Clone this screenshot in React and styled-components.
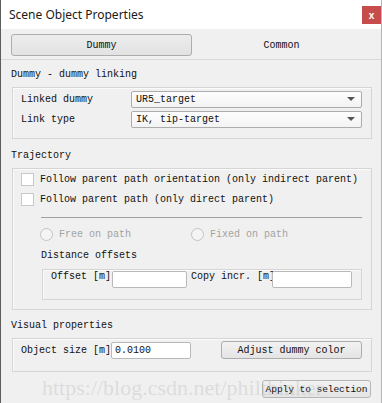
import React from 'react';
import styled, { createGlobalStyle } from 'styled-components';

const GlobalStyle = createGlobalStyle`
  html, body {
    margin: 0;
    padding: 0;
    background: #ffffff;
  }
`;

const Window = styled.div`
  position: relative;
  width: 382px;
  height: 403px;
  box-sizing: border-box;
  background: #f0f0f0;
  border-left: 1px solid #5e5e5e;
  border-right: 1px solid #b4b4b4;
  overflow: hidden;
  font-family: "Liberation Mono", "DejaVu Sans Mono", monospace;
  font-size: 10px;
  color: #111;
`;

const TitleBar = styled.div`
  height: 29px;
  background: #ffffff;
  display: flex;
  justify-content: space-between;
  align-items: flex-start;
`;

const Title = styled.div`
  font-family: "Noto Sans", "Liberation Sans", sans-serif;
  font-size: 12px;
  line-height: 29px;
  padding-left: 8px;
  color: #1a1a1a;
`;

const CloseButton = styled.div`
  margin-top: 6px;
  width: 19px;
  height: 18px;
  background: #c74d4d;
  color: #fff;
  font-family: "Liberation Sans", sans-serif;
  font-weight: bold;
  font-size: 10px;
  display: flex;
  align-items: center;
  justify-content: center;
`;

const TabBar = styled.div`
  display: grid;
  grid-template-columns: 181px 1fr;
  padding: 5px 10px 0 10px;
  height: 22px;
  margin-bottom: 3px;
`;

const Tab = styled.div`
  display: flex;
  align-items: center;
  justify-content: center;
  border-radius: 3px;
  border: 1px solid ${(p) => (p.active ? '#adadad' : 'transparent')};
  background: ${(p) => (p.active ? 'linear-gradient(#ececec, #e2e2e2)' : 'transparent')};
  font-family: "Liberation Mono", monospace;
  font-size: 10px;
`;

const Rule = styled.div`
  height: 1px;
  background: #d9d9d9;
`;

const Body = styled.div`
  padding: 0 9px 0 10px;
`;

const SectionLabel = styled.div`
  height: 14px;
  line-height: 14px;
  margin-top: ${(p) => p.top}px;
  margin-bottom: 5px;
  white-space: pre;
`;

const GroupBox = styled.div`
  margin-left: 1px;
  border: 1px solid #d5d5d5;
  box-shadow: inset 1px 1px 0 #fbfbfb;
  padding: ${(p) => p.pad};
  display: flex;
  flex-direction: column;
`;

const FormRow = styled.div`
  display: flex;
  align-items: center;
  height: 20px;
`;

const RowLabel = styled.div`
  width: ${(p) => p.w}px;
  flex: none;
  white-space: pre;
`;

const Combo = styled.div`
  width: 231px;
  height: 17px;
  box-sizing: border-box;
  border: 1px solid #acacac;
  border-radius: 2px;
  background: linear-gradient(#fdfdfd, #f3f3f3);
  display: flex;
  align-items: center;
  justify-content: space-between;
  padding: 0 6px 0 4px;
`;

const Arrow = styled.span`
  width: 0;
  height: 0;
  border-left: 4px solid transparent;
  border-right: 4px solid transparent;
  border-top: 4px solid #555;
`;

const CheckRow = styled.label`
  display: flex;
  align-items: center;
  height: 20px;
  gap: 6px;
  white-space: pre;
`;

const CheckBox = styled.span`
  width: 13px;
  height: 13px;
  box-sizing: border-box;
  border: 1px solid #c9c9c9;
  background: #ffffff;
`;

const Separator = styled.div`
  margin: 8px 9px 9px 20px;
  height: 1px;
  background: #a0a0a0;
`;

const RadioRow = styled.div`
  display: flex;
  align-items: center;
  height: 14px;
  padding-left: 19px;
`;

const Radio = styled.label`
  display: flex;
  align-items: center;
  gap: 6px;
  width: ${(p) => p.w}px;
  color: #a3a3a3;
  white-space: pre;
`;

const RadioDot = styled.span`
  width: 13px;
  height: 13px;
  box-sizing: border-box;
  border-radius: 50%;
  border: 1px solid #c4c4c4;
  background: #f4f4f4;
`;

const SubLabel = styled.div`
  padding-left: 20px;
  margin-top: 8px;
  height: 14px;
  line-height: 14px;
`;

const InnerBox = styled.div`
  margin: 6px 9px 9px 21px;
  height: 31px;
  box-sizing: border-box;
  border: 1px solid #d5d5d5;
  box-shadow: inset 1px 1px 0 #fbfbfb;
  display: flex;
  align-items: flex-start;
  padding: 1px 0 0 8px;
`;

const TextInput = styled.div`
  width: ${(p) => p.w}px;
  height: 17px;
  box-sizing: border-box;
  border: 1px solid #b9b9b9;
  border-radius: 2px;
  background: #ffffff;
  padding-left: 3px;
  line-height: 15px;
  flex: none;
`;

const PushButton = styled.div`
  height: 18px;
  box-sizing: border-box;
  border: 1px solid #adadad;
  border-radius: 3px;
  background: linear-gradient(#f2f2f2, #e4e4e4);
  display: flex;
  align-items: center;
  justify-content: center;
  white-space: pre;
  width: ${(p) => p.w}px;
`;

const Footer = styled.div`
  display: flex;
  justify-content: flex-end;
  padding: 8px 1px 0 0;
`;

const SmallButton = styled(PushButton)`
  font-size: 9.6px;
  letter-spacing: -0.1px;
  border-color: #b6b6b6;
`;

const Watermark = styled.div`
  position: absolute;
  left: 41px;
  top: 375px;
  font-family: "Liberation Serif", serif;
  font-size: 22px;
  color: rgba(150, 150, 150, 0.24);
  white-space: nowrap;
  pointer-events: none;
`;

export default function App() {
  return (
    <>
      <GlobalStyle />
      <Window>
        <TitleBar>
          <Title>Scene Object Properties</Title>
          <CloseButton>x</CloseButton>
        </TitleBar>
        <TabBar>
          <Tab active>Dummy</Tab>
          <Tab>Common</Tab>
        </TabBar>
        <Rule />
        <Body>
          <SectionLabel top={8}>Dummy - dummy linking</SectionLabel>
          <GroupBox pad="1px 8px 9px 8px">
            <FormRow>
              <RowLabel w={110}>Linked dummy</RowLabel>
              <Combo>UR5_target<Arrow /></Combo>
            </FormRow>
            <FormRow>
              <RowLabel w={110}>Link type</RowLabel>
              <Combo>IK, tip-target<Arrow /></Combo>
            </FormRow>
          </GroupBox>

          <SectionLabel top={10}>Trajectory</SectionLabel>
          <GroupBox pad="0 0 0 8px">
            <CheckRow><CheckBox />Follow parent path orientation (only indirect parent)</CheckRow>
            <CheckRow><CheckBox />Follow parent path (only direct parent)</CheckRow>
            <Separator />
            <RadioRow>
              <Radio w={151}><RadioDot />Free on path</Radio>
              <Radio w={140}><RadioDot />Fixed on path</Radio>
            </RadioRow>
            <SubLabel>Distance offsets</SubLabel>
            <InnerBox>
              <RowLabel w={61}>Offset [m]</RowLabel>
              <TextInput w={75} />
              <RowLabel w={81} style={{ paddingLeft: 4 }}>Copy incr. [m]</RowLabel>
              <TextInput w={80} />
            </InnerBox>
          </GroupBox>

          <SectionLabel top={9}>Visual properties</SectionLabel>
          <GroupBox pad="2px 8px 12px 8px">
            <FormRow style={{ height: 18 }}>
              <RowLabel w={90}>Object size [m]</RowLabel>
              <TextInput w={80}>0.0100</TextInput>
              <PushButton w={141} style={{ marginLeft: 30 }}>Adjust dummy color</PushButton>
            </FormRow>
          </GroupBox>

          <Footer>
            <SmallButton w={109}>Apply to selection</SmallButton>
          </Footer>
        </Body>
        <Watermark>https://blog.csdn.net/philthinker</Watermark>
      </Window>
    </>
  );
}
